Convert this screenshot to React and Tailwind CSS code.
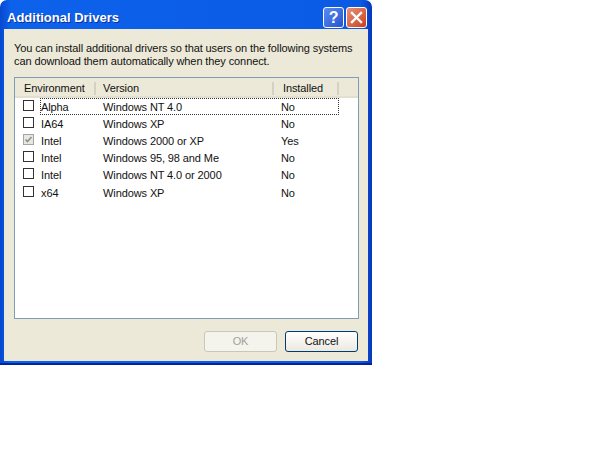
const rows = [
  { env: 'Alpha', version: 'Windows NT 4.0', installed: 'No', focused: true },
  { env: 'IA64', version: 'Windows XP', installed: 'No' },
  { env: 'Intel', version: 'Windows 2000 or XP', installed: 'Yes', locked: true },
  { env: 'Intel', version: 'Windows 95, 98 and Me', installed: 'No' },
  { env: 'Intel', version: 'Windows NT 4.0 or 2000', installed: 'No' },
  { env: 'x64', version: 'Windows XP', installed: 'No' },
];

function Checkbox({ locked }) {
  return (
    <span className={`mb-[3px] flex h-[11px] w-[11px] items-center justify-center border ${locked ? 'border-[#a5a5a5] bg-[#e8e8e2]' : 'border-[#333] bg-white'}`}>
      {locked && (
        <svg width="9" height="9" viewBox="0 0 9 9">
          <path d="M1.5 4.5 L3.5 6.5 L7.5 2" fill="none" stroke="#8f8f8f" strokeWidth="1.6" />
        </svg>
      )}
    </span>
  );
}

function Row({ row }) {
  return (
    <div className="flex h-[17.2px] items-center">
      <div className="flex w-[25px] justify-start pl-[8px]">
        <Checkbox locked={row.locked} />
      </div>
      <div className={`flex h-[17px] w-[299px] items-center pt-[1px] ${row.focused ? 'border border-dotted border-[#333]' : 'border border-transparent'}`}>
        <span className="w-[62px]">{row.env}</span>
        <span className="w-[178px]">{row.version}</span>
        <span>{row.installed}</span>
      </div>
    </div>
  );
}

export default function App() {
  return (
    <div className="h-[470px] w-[604px] bg-white font-['Liberation_Sans',sans-serif] text-[11px] leading-[13px] tracking-[-0.1px] text-[#111]">
      <div className="flex h-[365px] w-[372px] flex-col rounded-t-[7px] border-b-[2px] border-[#00229a] px-[4px] pb-[2px] [background:linear-gradient(90deg,#0848d0,#0d62ec_3%,#0a5ae4_97%,#0838b8)]">
        <div className="flex h-[29px] shrink-0 items-center justify-between pt-[5px] pl-[3px] pr-[1px]">
          <span className="text-[13px] font-bold tracking-normal text-white [text-shadow:1px_1px_#0f2f9c]">Additional Drivers</span>
          <div className="flex gap-[2px]">
            <div className="flex h-[21px] w-[21px] items-center justify-center rounded-[3px] border border-white bg-gradient-to-br from-[#5b8bf0] to-[#2554d0] text-[16px] font-bold text-white">?</div>
            <div className="flex h-[21px] w-[21px] items-center justify-center rounded-[3px] border border-white bg-gradient-to-br from-[#e89078] to-[#c93d18]">
              <svg width="13" height="13" viewBox="0 0 13 13">
                <path d="M2 2 L11 11 M11 2 L2 11" stroke="#fff" strokeWidth="2.4" strokeLinecap="square" />
              </svg>
            </div>
          </div>
        </div>
        <div className="flex min-h-0 flex-1 flex-col bg-[#ece9d8] px-[10px]">
          <p className="mt-[13px] h-[35px] whitespace-nowrap leading-[13px]">
            You can install additional drivers so that users on the following systems<br />
            can download them automatically when they connect.
          </p>
          <div className="h-[242px] w-[345px] border border-[#7f9db9] bg-white">
            <div className="flex h-[20px] items-center border-b-[2px] border-[#e2dfd0] bg-[#ece9d8] pt-[2px]">
              <span className="w-[81px] border-r-2 border-[#d6d2c2] pl-[9px]">Environment</span>
              <span className="w-[178px] border-r-2 border-[#d6d2c2] pl-[7px]">Version</span>
              <span className="w-[65px] border-r-2 border-[#d6d2c2] pl-[9px]">Installed</span>
            </div>
            <div>
              {rows.map((row, i) => <Row key={i} row={row} />)}
            </div>
          </div>
          <div className="mt-[12px] flex justify-end gap-[8px]">
            <button className="h-[21px] w-[73px] rounded-[3px] border border-[#c9c7ba] bg-[#f4f3ec] text-[#a3a295]">OK</button>
            <button className="h-[21px] w-[73px] rounded-[3px] border border-[#003c74] bg-gradient-to-b from-white to-[#ece9df]">Cancel</button>
          </div>
        </div>
      </div>
    </div>
  );
}
